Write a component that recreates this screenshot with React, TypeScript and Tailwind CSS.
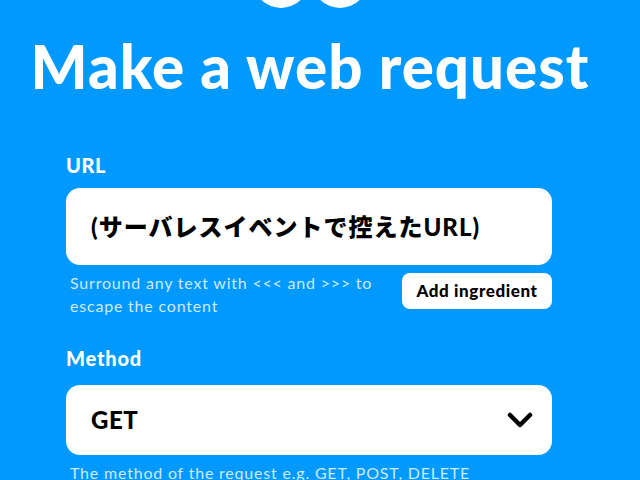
const font = { fontFamily: "Lato, 'Noto Sans CJK JP', sans-serif" };

function Logo() {
  return (
    <div className="flex h-[8px] justify-center gap-[3px] overflow-hidden pr-[20px]">
      <div className="-mt-[48px] h-[56px] w-[56px] shrink-0 rounded-full bg-white" />
      <div className="-mt-[48px] h-[56px] w-[56px] shrink-0 rounded-full bg-white" />
    </div>
  );
}

function Chevron() {
  return (
    <svg width="26" height="18" viewBox="0 0 26 18" fill="none">
      <path d="M3 4 L13 14 L23 4" stroke="#000" strokeWidth="4.5" strokeLinecap="round" strokeLinejoin="round" />
    </svg>
  );
}

export default function App() {
  return (
    <div className="h-[480px] w-[640px] overflow-hidden bg-[#0099ff] text-white" style={font}>
      <Logo />
      <h1 className="mt-[26px] pr-[20px] text-center text-[60px] font-black leading-[64px] tracking-[1px]">
        Make a web request
      </h1>

      <div className="ml-[66px] mt-[55px] w-[486px]">
        <label className="block text-[20px] font-black leading-[24px] tracking-[0.5px]">URL</label>
        <div className="mt-[11px] flex h-[77px] items-center rounded-[14px] bg-white pl-[25px] text-[24px] font-black tracking-[1px] text-black">
          (サーバレスイベントで控えたURL)
        </div>

        <div className="mt-[6px] flex items-start justify-between">
          <p className="pl-[4px] text-[16px] leading-[23px] tracking-[0.8px] text-[#cdeaff]">
            Surround any text with &lt;&lt;&lt; and &gt;&gt;&gt; to
            <br />
            escape the content
          </p>
          <button className="mt-[2px] h-[36px] w-[150px] rounded-[8px] bg-white text-[17px] font-black tracking-[0.6px] text-black">
            Add ingredient
          </button>
        </div>

        <label className="mt-[29px] block text-[20px] font-black leading-[24px] tracking-[0.8px]">Method</label>
        <div className="mt-[15px] flex h-[70px] items-center justify-between rounded-[14px] bg-white pl-[25px] pr-[19px] text-[24px] font-black tracking-[0.5px] text-black">
          <span>GET</span>
          <Chevron />
        </div>
        <p className="mt-[6px] pl-[4px] text-[16px] leading-[23px] tracking-[0.8px] text-[#cdeaff]">
          The method of the request e.g. GET, POST, DELETE
        </p>
      </div>
    </div>
  );
}
